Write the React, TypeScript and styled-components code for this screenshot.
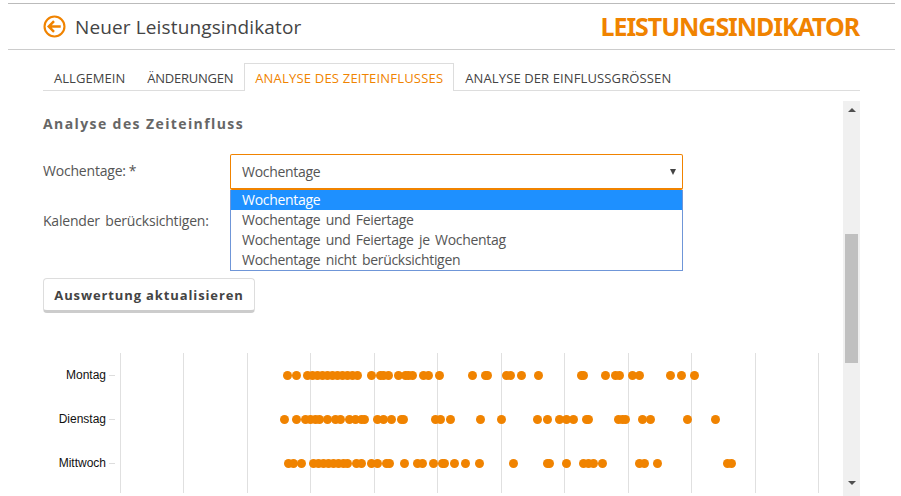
import { createGlobalStyle } from 'styled-components';
import styled from 'styled-components';

const orange = '#f08300';

const tabs = [
  { label: 'Allgemein', tracking: 0.05 },
  { label: 'Änderungen', tracking: -0.25 },
  { label: 'Analyse des Zeiteinflusses', tracking: 0.2 },
  { label: 'Analyse der Einflussgrößen', tracking: 0.12 },
];
const options = [
  'Wochentage',
  'Wochentage und Feiertage',
  'Wochentage und Feiertage je Wochentag',
  'Wochentage nicht berücksichtigen',
];
const gridLines = [120, 183, 247, 310, 374, 437, 501, 564, 628, 691, 755, 818];
const rows = [
  {
    name: 'Montag',
    dots: [287, 296, 307, 312, 317, 322, 327, 332, 337, 342, 347, 352, 357, 371, 380, 383, 388, 398, 405, 408, 412, 423, 428, 439, 472, 485, 487, 506, 510, 521, 538, 581, 583, 605, 615, 619, 632, 639, 670, 681, 694],
  },
  {
    name: 'Dienstag',
    dots: [284, 296, 305, 310, 315, 319, 327, 335, 340, 349, 355, 361, 364, 377, 383, 391, 401, 403, 435, 440, 450, 480, 501, 537, 547, 559, 566, 573, 586, 588, 618, 622, 625, 642, 650, 687, 715],
  },
  {
    name: 'Mittwoch',
    dots: [288, 293, 301, 313, 318, 323, 328, 333, 338, 343, 347, 356, 361, 371, 377, 386, 389, 404, 417, 422, 433, 442, 444, 454, 465, 479, 513, 547, 549, 566, 583, 588, 593, 602, 639, 644, 657, 727, 731],
  },
];

const GlobalStyle = createGlobalStyle`
  html, body {
    margin: 0;
    height: 100%;
    background: #fff;
    overflow: hidden;
  }
  body {
    font-family: 'Open Sans', 'Liberation Sans', sans-serif;
    color: #555;
  }
`;

const Page = styled.div`
  width: 901px;
  height: 496px;
  padding: 3px 6px 0 8px;
  box-sizing: border-box;
  overflow: hidden;
`;

const Header = styled.header`
  height: 45px;
  border-top: 1px solid #bbb;
  border-bottom: 1px solid #ccc;
  display: flex;
  align-items: center;
  padding: 0 36px 0 35px;
`;

const BackIcon = styled.svg`
  width: 23px;
  height: 23px;
  flex: none;
`;

const PageTitle = styled.h1`
  margin: 0 0 0 9px;
  font-size: 19px;
  font-weight: 400;
  color: #444;
  letter-spacing: 0.13px;
  flex: 1;
`;

const Brand = styled.div`
  font-size: 25px;
  font-weight: 700;
  color: ${orange};
  letter-spacing: -1.05px;
  font-family: 'Noto Sans', sans-serif;
  margin-top: -2px;
`;

const Content = styled.div`
  margin: 13px 35px 0 35px;
`;

const TabBar = styled.nav`
  display: flex;
  height: 27px;
  border-bottom: 1px solid #ddd;
  box-sizing: content-box;
`;

const Tab = styled.div<{ $active: boolean; $tracking: number }>`
  padding: 0 10px;
  font-size: 13px;
  line-height: 28px;
  text-transform: uppercase;
  letter-spacing: ${(p) => p.$tracking}px;
  color: ${(p) => (p.$active ? orange : '#444')};
  background: #fff;
  border: 1px solid ${(p) => (p.$active ? '#ddd' : 'transparent')};
  border-bottom: 0;
  height: ${(p) => (p.$active ? '28px' : '27px')};
  box-sizing: border-box;
`;

const Scroller = styled.div`
  display: flex;
  height: 395px;
  margin-top: 10px;
`;

const Main = styled.main`
  flex: 1;
  min-width: 0;
`;

const SectionTitle = styled.h2`
  margin: 14px 0 0;
  font-size: 14px;
  line-height: 18px;
  font-weight: 700;
  letter-spacing: 1.4px;
  color: #666;
`;

const FormRow = styled.div`
  display: flex;
  align-items: flex-start;
  margin-top: 21px;
  position: relative;
`;

const Label = styled.label`
  width: 187px;
  flex: none;
  font-size: 14px;
  line-height: 20px;
  letter-spacing: -0.2px;
  word-spacing: 2px;
  color: #555;
  padding-top: 7px;
`;

const Required = styled.span`
  margin-left: 3px;
`;

const SelectBox = styled.div`
  width: 453px;
  height: 36px;
  box-sizing: border-box;
  border: 1px solid ${orange};
  border-bottom-width: 2px;
  border-radius: 2px;
  display: flex;
  align-items: center;
  justify-content: space-between;
  padding: 0 5px 0 11px;
  font-size: 14px;
  letter-spacing: -0.3px;
  color: #555;
`;

const Caret = styled.span`
  width: 0;
  height: 0;
  border-left: 3px solid transparent;
  border-right: 3px solid transparent;
  border-top: 6px solid #444;
  margin-right: 1px;
`;

const OptionList = styled.ul`
  position: absolute;
  left: 187px;
  top: 36px;
  width: 453px;
  margin: 0;
  padding: 0;
  list-style: none;
  box-sizing: border-box;
  border: 1px solid #6f96d8;
  border-top: 0;
  background: #fff;
  z-index: 2;
`;

const OptionItem = styled.li<{ $selected: boolean }>`
  height: 20px;
  line-height: 20px;
  padding-left: 11px;
  font-size: 14px;
  letter-spacing: -0.3px;
  word-spacing: 2px;
  color: ${(p) => (p.$selected ? '#fff' : '#555')};
  background: ${(p) => (p.$selected ? '#1e90ff' : 'transparent')};
`;

const SecondRow = styled(FormRow)`
  margin-top: 14px;
  height: 70px;
`;

const UpdateButton = styled.button`
  display: block;
  margin-top: 4px;
  width: 212px;
  height: 35px;
  padding: 0;
  background: #fff;
  border: 1px solid #ddd;
  border-bottom: 3px solid #ccc;
  border-radius: 4px;
  font-family: inherit;
  font-size: 13px;
  font-weight: 700;
  letter-spacing: 0.88px;
  color: #444;
`;

const Chart = styled.div`
  margin-top: 40px;
  position: relative;
  height: 140px;
  width: 800px;
`;

const GridLine = styled.div`
  position: absolute;
  top: 0;
  bottom: 0;
  width: 1px;
  background: #e0e0e0;
`;

const RowLabel = styled.div`
  position: absolute;
  right: 737px;
  width: 90px;
  text-align: right;
  font-family: 'Liberation Sans', Arial, sans-serif;
  font-size: 12px;
  line-height: 14px;
  color: #111;
  &::after {
    content: '';
    position: absolute;
    right: -9px;
    top: 7px;
    width: 6px;
    height: 1px;
    background: #ddd;
  }
`;

const Dot = styled.div`
  position: absolute;
  width: 9px;
  height: 9px;
  border-radius: 50%;
  background: ${orange};
`;

const ScrollTrack = styled.div`
  width: 17px;
  flex: none;
  background: #f0f0f0;
  display: flex;
  flex-direction: column;
  align-items: center;
  justify-content: space-between;
  padding: 7px 0 11px;
  box-sizing: border-box;
  position: relative;
`;

const ScrollThumb = styled.div`
  position: absolute;
  top: 133px;
  left: 2px;
  width: 13px;
  height: 129px;
  background: #c0c0c0;
`;

const ArrowUp = styled.span`
  border-left: 4px solid transparent;
  border-right: 4px solid transparent;
  border-bottom: 4px solid #505050;
`;

const ArrowDown = styled.span`
  border-left: 4px solid transparent;
  border-right: 4px solid transparent;
  border-top: 4px solid #505050;
`;

export default function App() {
  return (
    <>
      <GlobalStyle />
      <Page>
        <Header>
          <BackIcon viewBox="0 0 24 24" fill="none" stroke={orange} strokeWidth="2.2">
            <circle cx="12" cy="12" r="10.4" />
            <path d="M18.5 12H6.5M11.5 6.5L6 12l5.5 5.5" strokeWidth="2.6" />
          </BackIcon>
          <PageTitle>Neuer Leistungsindikator</PageTitle>
          <Brand>LEISTUNGSINDIKATOR</Brand>
        </Header>
        <Content>
          <TabBar>
            {tabs.map((t, i) => (
              <Tab key={t.label} $active={i === 2} $tracking={t.tracking}>
                {t.label}
              </Tab>
            ))}
          </TabBar>
          <Scroller>
            <Main>
              <SectionTitle>Analyse des Zeiteinfluss</SectionTitle>
              <FormRow>
                <Label>
                  Wochentage:<Required>*</Required>
                </Label>
                <SelectBox>
                  Wochentage
                  <Caret />
                </SelectBox>
                <OptionList>
                  {options.map((o, i) => (
                    <OptionItem key={o} $selected={i === 0}>
                      {o}
                    </OptionItem>
                  ))}
                </OptionList>
              </FormRow>
              <SecondRow>
                <Label>Kalender berücksichtigen:</Label>
              </SecondRow>
              <UpdateButton>Auswertung aktualisieren</UpdateButton>
              <Chart>
                {gridLines.map((x) => (
                  <GridLine key={x} style={{ left: x - 43 }} />
                ))}
                {rows.map((row, r) => (
                  <div key={row.name}>
                    <RowLabel style={{ top: 15 + r * 44 }}>{row.name}</RowLabel>
                    {row.dots.map((x, i) => (
                      <Dot key={i} style={{ left: x - 47.5, top: 17.5 + r * 44 }} />
                    ))}
                  </div>
                ))}
              </Chart>
            </Main>
            <ScrollTrack>
              <ArrowUp />
              <ScrollThumb />
              <ArrowDown />
            </ScrollTrack>
          </Scroller>
        </Content>
      </Page>
    </>
  );
}
